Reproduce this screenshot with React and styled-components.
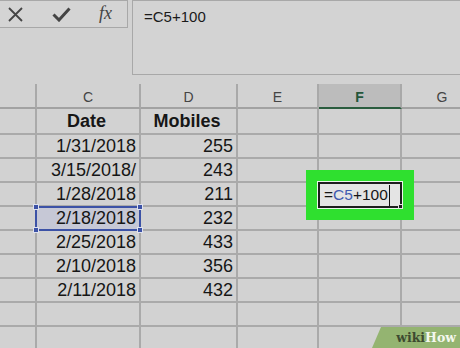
import React from 'react';
import styled, { createGlobalStyle } from 'styled-components';

const GlobalStyle = createGlobalStyle`
  html, body {
    margin: 0;
    padding: 0;
    background: #d2d2d2;
    overflow: hidden;
  }
  * {
    box-sizing: border-box;
  }
`;

const columns = ['B', 'C', 'D', 'E', 'F', 'G'];

const rows = [
  { date: 'Date', mobiles: 'Mobiles', header: true },
  { date: '1/31/2018', mobiles: '255' },
  { date: '3/15/2018/', mobiles: '243' },
  { date: '1/28/2018', mobiles: '211', editing: true },
  { date: '2/18/2018', mobiles: '232', selected: true },
  { date: '2/25/2018', mobiles: '433' },
  { date: '2/10/2018', mobiles: '356' },
  { date: '2/11/2018', mobiles: '432' },
  {},
  {},
];

export default function App() {
  return (
    <Page>
      <GlobalStyle />
      <FormulaBar>
        <ButtonBox>
          <ToolIcon>
            <svg width="17" height="17" viewBox="0 0 17 17">
              <path d="M2 2 L15 15 M15 2 L2 15" stroke="#444" strokeWidth="1.8" fill="none" />
            </svg>
          </ToolIcon>
          <ToolIcon>
            <svg width="19" height="15" viewBox="0 0 19 15">
              <path d="M1.5 7.5 L7 13 L17.5 1.5" stroke="#444" strokeWidth="3" fill="none" />
            </svg>
          </ToolIcon>
          <FxLabel>fx</FxLabel>
        </ButtonBox>
        <FormulaInput>=C5+100</FormulaInput>
      </FormulaBar>

      <Sheet>
        {columns.map(c => (
          <ColumnHeader key={c} active={c === 'F'}>
            {c === 'B' ? '' : c}
          </ColumnHeader>
        ))}
        {rows.map((r, i) => (
          <React.Fragment key={i}>
            <Cell />
            {r.selected ? (
              <SelectedCell>
                {r.date}
                <Handle style={{ left: -4, top: -4 }} />
                <Handle style={{ right: -4, top: -4 }} />
                <Handle style={{ left: -4, bottom: -4 }} />
                <Handle style={{ right: -4, bottom: -4 }} />
              </SelectedCell>
            ) : (
              <Cell align={r.header ? 'center' : 'right'} bold={r.header}>
                {r.date}
              </Cell>
            )}
            <Cell align={r.header ? 'center' : 'right'} bold={r.header}>
              {r.mobiles}
            </Cell>
            <Cell />
            {r.editing ? (
              <EditingCell>
                =<Ref>C5</Ref>+100
                <Caret />
                <FillHandle />
              </EditingCell>
            ) : (
              <Cell />
            )}
            <Cell />
          </React.Fragment>
        ))}
      </Sheet>

      <Watermark>
        <Wiki>wiki</Wiki>
        <How>How</How>
      </Watermark>
    </Page>
  );
}

const Page = styled.div`
  position: relative;
  width: 460px;
  height: 348px;
  overflow: hidden;
  background: #d2d2d2;
  font-family: 'Liberation Sans', Arial, sans-serif;
`;

const FormulaBar = styled.div`
  display: flex;
  align-items: flex-start;
  gap: 4px;
  height: 84px;
`;

const ButtonBox = styled.div`
  display: flex;
  align-items: center;
  justify-content: space-between;
  width: 128px;
  height: 28px;
  padding: 0 15px 0 7px;
  border: 1px solid #a8a8a8;
  border-left: none;
  background: #d4d4d4;
`;

const ToolIcon = styled.span`
  display: flex;
  align-items: center;
`;

const FxLabel = styled.span`
  font-family: 'Liberation Serif', 'Times New Roman', serif;
  font-style: italic;
  font-size: 18px;
  color: #444;
  margin-top: -2px;
`;

const FormulaInput = styled.div`
  flex: 1;
  height: 75px;
  padding: 7px 0 0 11px;
  border: 1px solid #a8a8a8;
  border-right: none;
  background: #d3d3d3;
  font-size: 15px;
  color: #1a1a1a;
`;

const Sheet = styled.div`
  display: grid;
  grid-template-columns: 37px 104px 97px 81px 83px 82px;
  grid-template-rows: 25px 26px repeat(9, 24px);
  width: 484px;
`;

const ColumnHeader = styled.div`
  display: flex;
  align-items: center;
  justify-content: center;
  border-right: 2px solid #a9a9a9;
  border-bottom: 2px solid ${p => (p.active ? '#2a5c3e' : '#a2a2a2')};
  background: ${p => (p.active ? '#bcbcbc' : '#d2d2d2')};
  color: ${p => (p.active ? '#24563a' : '#444')};
  font-weight: ${p => (p.active ? 'bold' : 'normal')};
  font-size: 14px;
  padding-top: 2px;
`;

const Cell = styled.div`
  display: flex;
  align-items: center;
  justify-content: ${p => (p.align === 'center' ? 'center' : 'flex-end')};
  padding: 0 3px 0 0;
  border-right: 2px solid #aaaaaa;
  border-bottom: 2px solid #aaaaaa;
  font-size: 18px;
  font-weight: ${p => (p.bold ? 'bold' : 'normal')};
  color: #161616;
  white-space: nowrap;
`;

const SelectedCell = styled(Cell)`
  position: relative;
  margin: -1px 0 0 -2px;
  border: 2px solid #3c52a6;
  background: #c6c8d6;
`;

const Handle = styled.span`
  position: absolute;
  width: 6px;
  height: 6px;
  background: #3c52a6;
  border: 1px solid #dfe2ee;
`;

const EditingCell = styled.div`
  position: relative;
  z-index: 2;
  display: flex;
  align-items: center;
  margin: -1px 0 -1px -1px;
  padding-left: 4px;
  border: 2px solid #1d1d1d;
  background: #e4e4e4;
  box-shadow: 0 0 0 1px #eaf7ea, 0 0 0 12px #2fe02f;
  font-size: 15.5px;
  color: #161616;
`;

const Ref = styled.span`
  color: #3e5bb0;
`;

const Caret = styled.span`
  width: 1.5px;
  height: 21px;
  margin-left: 1px;
  background: #111;
`;

const FillHandle = styled.span`
  position: absolute;
  right: -3px;
  bottom: -3px;
  width: 5px;
  height: 5px;
  background: #1d1d1d;
  border: 1px solid #e4e4e4;
`;

const Watermark = styled.div`
  position: absolute;
  right: 0;
  bottom: 0;
  width: 88px;
  height: 21px;
  display: flex;
  align-items: center;
  justify-content: flex-end;
  padding: 0 4px 0 0;
  background: #94b471;
  clip-path: polygon(9px 0, 100% 0, 100% 100%, 0 100%);
  font-family: 'DejaVu Serif', 'Liberation Serif', serif;
  font-weight: bold;
  font-size: 12.5px;
`;

const Wiki = styled.span`
  color: #3d4a30;
`;

const How = styled.span`
  color: #f4f8ee;
`;
